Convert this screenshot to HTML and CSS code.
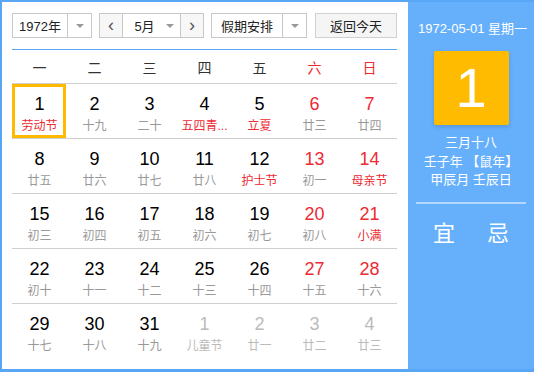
FILE: index.html
```html
<!DOCTYPE html>
<html lang="zh-CN">
<head>
	<meta charset="UTF-8">
	<title>万年历</title>
	<link rel="stylesheet" href="styles.css">
</head>
<body>
	<div class="calendar">
		<div class="main">
			<div class="toolbar">
				<div class="select year-select">
					<span class="select-text">1972年</span>
					<span class="select-arrow"></span>
				</div>
				<div class="select month-select">
					<span class="nav-btn">&lsaquo;</span>
					<span class="month-mid"><span class="select-text">5月</span><span class="caret"></span></span>
					<span class="nav-btn nav-next">&rsaquo;</span>
				</div>
				<div class="select holiday-select">
					<span class="select-text">假期安排</span>
					<span class="select-arrow"></span>
				</div>
				<div class="today-btn">返回今天</div>
			</div>

			<div class="weekdays">
				<span>一</span><span>二</span><span>三</span><span>四</span><span>五</span><span class="red">六</span><span class="red">日</span>
			</div>

			<div class="days">
				<div class="day selected"><b>1</b><i class="fest">劳动节</i></div>
				<div class="day"><b>2</b><i>十九</i></div>
				<div class="day"><b>3</b><i>二十</i></div>
				<div class="day"><b>4</b><i class="fest">五四青...</i></div>
				<div class="day"><b>5</b><i class="fest">立夏</i></div>
				<div class="day weekend"><b>6</b><i>廿三</i></div>
				<div class="day weekend"><b>7</b><i>廿四</i></div>

				<div class="day"><b>8</b><i>廿五</i></div>
				<div class="day"><b>9</b><i>廿六</i></div>
				<div class="day"><b>10</b><i>廿七</i></div>
				<div class="day"><b>11</b><i>廿八</i></div>
				<div class="day"><b>12</b><i class="fest">护士节</i></div>
				<div class="day weekend"><b>13</b><i>初一</i></div>
				<div class="day weekend"><b>14</b><i class="fest">母亲节</i></div>

				<div class="day"><b>15</b><i>初三</i></div>
				<div class="day"><b>16</b><i>初四</i></div>
				<div class="day"><b>17</b><i>初五</i></div>
				<div class="day"><b>18</b><i>初六</i></div>
				<div class="day"><b>19</b><i>初七</i></div>
				<div class="day weekend"><b>20</b><i>初八</i></div>
				<div class="day weekend"><b>21</b><i class="fest">小满</i></div>

				<div class="day"><b>22</b><i>初十</i></div>
				<div class="day"><b>23</b><i>十一</i></div>
				<div class="day"><b>24</b><i>十二</i></div>
				<div class="day"><b>25</b><i>十三</i></div>
				<div class="day"><b>26</b><i>十四</i></div>
				<div class="day weekend"><b>27</b><i>十五</i></div>
				<div class="day weekend"><b>28</b><i>十六</i></div>

				<div class="day"><b>29</b><i>十七</i></div>
				<div class="day"><b>30</b><i>十八</i></div>
				<div class="day"><b>31</b><i>十九</i></div>
				<div class="day other"><b>1</b><i>儿童节</i></div>
				<div class="day other"><b>2</b><i>廿一</i></div>
				<div class="day other"><b>3</b><i>廿二</i></div>
				<div class="day other"><b>4</b><i>廿三</i></div>
			</div>
		</div>

		<div class="side">
			<div class="side-date">1972-05-01 星期一</div>
			<div class="side-day">1</div>
			<div class="side-lunar">
				<p>三月十八</p>
				<p>壬子年 【鼠年】</p>
				<p>甲辰月 壬辰日</p>
			</div>
			<div class="side-line"></div>
			<div class="side-yiji"><span>宜</span><span>忌</span></div>
		</div>
	</div>
</body>
</html>
```

FILE: styles.css
```css
*,
*::before,
*::after {
	margin: 0;
	padding: 0;
	box-sizing: border-box;
}

body {
	font-family: "Liberation Sans", "Noto Sans CJK SC", sans-serif;
	color: #333;
	background: #fff;
}

.calendar {
	display: flex;
	width: 534px;
	height: 372px;
	border: 2px solid #5aa6f6;
	border-bottom-width: 3px;
	border-right: none;
}

/* left part: toolbar + month grid */
.main {
	width: 406px;
	padding: 11px 11px 0 10px;
	background: #fff;
}

.toolbar {
	display: flex;
	height: 25px;
	font-size: 13px;
}

.select {
	display: flex;
	height: 25px;
	border: 1px solid #c8c8c8;
	background: #fff;
	margin-right: 7px;
}

.select-text {
	flex: 1;
	display: flex;
	align-items: center;
	justify-content: center;
	color: #222;
}

.select-arrow {
	width: 24px;
	border-left: 1px solid #c8c8c8;
	position: relative;
}

.select-arrow::after,
.caret::after {
	content: "";
	position: absolute;
	left: 50%;
	top: 10px;
	margin-left: -4px;
	border: 4px solid transparent;
	border-top: 4px solid #999;
	border-bottom: none;
}

.year-select { width: 80px; }

.month-select { width: 105px; }

.holiday-select {
	width: 96px;
	margin-right: 8px;
}

.nav-btn {
	width: 23px;
	display: flex;
	align-items: center;
	justify-content: center;
	font-size: 18px;
	color: #555;
	background: #f7f7f7;
	border-right: 1px solid #c8c8c8;
	line-height: 1;
	padding-bottom: 2px;
}

.nav-next {
	border-right: none;
	border-left: 1px solid #c8c8c8;
}

.month-mid {
	flex: 1;
	display: flex;
}

.month-mid .select-text {
	padding-left: 6px;
}

.caret {
	width: 20px;
	position: relative;
}

.today-btn {
	width: 82px;
	height: 25px;
	border: 1px solid #d0d0d0;
	background: #f5f5f5;
	display: flex;
	align-items: center;
	justify-content: center;
	color: #222;
}

.weekdays {
	display: grid;
	grid-template-columns: repeat(7, 55px);
	margin-top: 11px;
	border-top: 1px solid #5aa6f6;
	height: 34px;
	align-items: center;
	font-size: 14px;
	text-align: center;
	color: #333;
}

.red { color: #ee2a33; }

.days {
	display: grid;
	grid-template-columns: repeat(7, 55px);
	grid-auto-rows: 55px;
}

.day {
	border-top: 1px solid #cfcfcf;
	display: flex;
	flex-direction: column;
	align-items: center;
	padding-top: 10px;
}

.day b {
	font-weight: normal;
	font-size: 18px;
	line-height: 20px;
	color: #000;
}

.day i {
	font-style: normal;
	font-size: 12px;
	line-height: 16px;
	margin-top: 4px;
	color: #999;
	white-space: nowrap;
}

.day .fest { color: #ee2a33; }

.day.weekend b { color: #ee2a33; }

.day.other b,
.day.other i { color: #bbb; }

.day.selected {
	position: relative;
}

.day.selected::after {
	content: "";
	position: absolute;
	left: 0;
	top: 0;
	width: 54px;
	height: 54px;
	border: 3px solid #ffb900;
}

/* right info panel */
.side {
	flex: 1;
	background: #66affb;
	color: #fff;
	display: flex;
	flex-direction: column;
	align-items: center;
	padding-top: 18px;
}

.side-date {
	font-size: 13px;
	line-height: 18px;
	padding-left: 3px;
}

.side-day {
	width: 75px;
	height: 74px;
	margin-top: 13px;
	background: #ffbb00;
	border-radius: 2px;
	box-shadow: 0 2px 4px rgba(0, 0, 0, 0.15);
	font-size: 56px;
	line-height: 74px;
	text-align: center;
}

.side-lunar {
	margin-top: 9px;
	font-size: 13px;
	line-height: 18.5px;
	text-align: center;
}

.side-line {
	width: 110px;
	height: 2px;
	margin-top: 12px;
	background: rgba(255, 255, 255, 0.5);
}

.side-yiji {
	display: flex;
	gap: 32px;
	margin-top: 16px;
	font-size: 22px;
	line-height: 28px;
}
```
